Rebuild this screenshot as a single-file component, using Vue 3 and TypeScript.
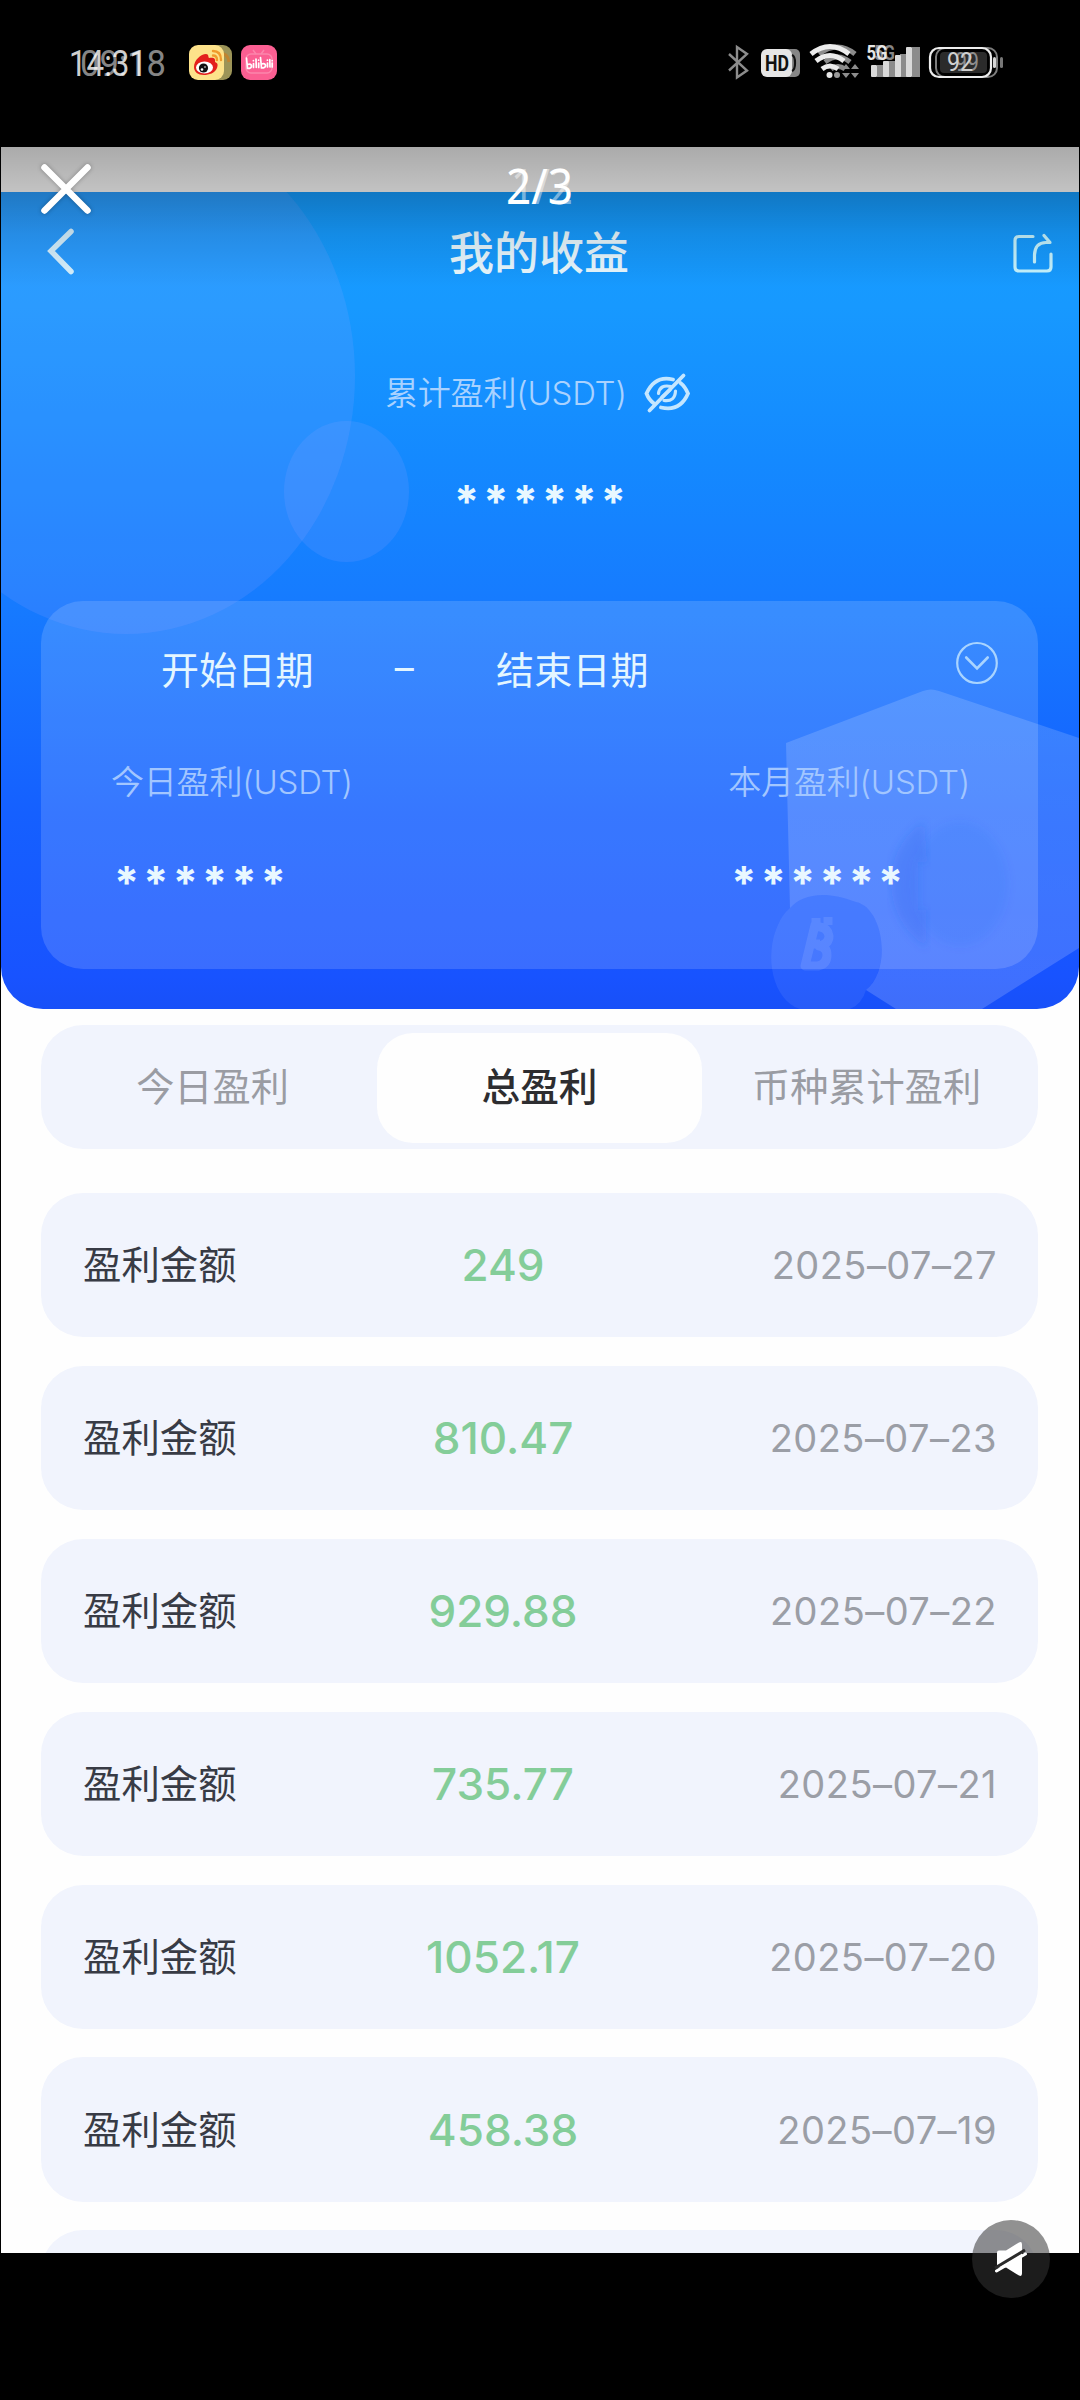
<script setup lang="ts">
interface ProfitRow {
  amount: string
  date: string
}

const rows: ProfitRow[] = [
  { amount: '249', date: '2025–07–27' },
  { amount: '810.47', date: '2025–07–23' },
  { amount: '929.88', date: '2025–07–22' },
  { amount: '735.77', date: '2025–07–21' },
  { amount: '1052.17', date: '2025–07–20' },
  { amount: '458.38', date: '2025–07–19' },
]

const tabs: string[] = ['今日盈利', '总盈利', '币种累计盈利']
const activeTab = 1
</script>

<template>
  <div class="screen">
    <header class="status">
      <svg class="status-left" width="300" height="60" viewBox="0 30 300 60">
        <text x="80" y="76" class="clock ghost" textLength="86" lengthAdjust="spacingAndGlyphs">09:18</text>
        <text x="69" y="76" class="clock" textLength="78" lengthAdjust="spacingAndGlyphs">14:31</text>
        <rect x="197" y="45" width="35" height="35" rx="9" fill="#9c9458" />
        <path d="M219 53 q9 0 10 9" fill="none" stroke="#c08430" stroke-width="3" />
        <rect x="189" y="45" width="35" height="35" rx="9" fill="#fde28a" />
        <path d="M194 67 c0-7 7-13 12-13 3 0 2 3 3 4 4-1 7 0 6 4 3 1 3 3 2 6 -2 5-8 7-13 7 -6 0-10-3-10-8z" fill="#e31f1c" />
        <ellipse cx="204.500" cy="67.500" rx="8.500" ry="6" fill="#fff" />
        <circle cx="203.500" cy="68" r="4.600" fill="#111" />
        <circle cx="202" cy="69.500" r="1.300" fill="#fff" />
        <circle cx="205" cy="67" r=".8" fill="#fff" />
        <path d="M213 51 q8 0 8 9 M213 55.500 q4 0 4 4.500" fill="none" stroke="#f19a2c" stroke-width="2.400" stroke-linecap="round" />
        <rect x="241" y="45" width="36" height="35" rx="9" fill="#fb5f92" />
        <rect x="246" y="54" width="26" height="19" rx="5" fill="none" stroke="#fc86ac" stroke-width="1.500" />
        <path d="M253 50 l3 4 M264 50 l-3 4" stroke="#fc86ac" stroke-width="1.500" />
        <g fill="none" stroke="#fff" stroke-width="1.700" stroke-linecap="round">
          <path d="M246.500 58 l1 10.500 q4 0 4-2.500 q0-2.500-4-1.500 M253.500 63.500 v4 M256 59 l.3 8.500 M258.700 63 v4.500 M253.400 60.500 v.2 M258.600 60 v.2" />
          <path d="M260.500 57.500 l1 10.500 q4 0 4-2.500 q0-2.500-4-1.500 M267.500 63 v4 M269.800 59.500 l.2 7.500 M272.200 63 v4 M267.400 60 v.2 M272.200 60.500 v.2" />
        </g>
      </svg>
      <svg class="status-right" width="300" height="60" viewBox="710 30 300 60">
        <path d="M729 54 L747 70.500 L737 77.500 V47 L747 54 L729 70.500" fill="none" stroke="#8c8c8c" stroke-width="2.400" />
        <rect x="769" y="49" width="31" height="28" rx="5" fill="#868686" />
        <rect x="761" y="49" width="31" height="28" rx="6" fill="#e6e6e6" />
        <text x="765" y="71" class="hd" textLength="24" lengthAdjust="spacingAndGlyphs">HD</text>
        <path d="M792 55 q3 1 3 8 t-3 8" fill="none" stroke="#111" stroke-width="2.200" />
        <g fill="none" stroke="#8b8b8b" stroke-width="5">
          <path d="M819 54 Q838 40 855 54 M825 62 Q838 52 850 62 M831 69 Q838 64 845 69" />
        </g>
        <g fill="none" stroke="#ececec" stroke-width="5">
          <path d="M811 54 Q830 39 849 54 M816 61 Q830 50 844 61 M822 69 Q830 63 838 69" />
        </g>
        <circle cx="829.500" cy="75" r="3" fill="#e6e6e6" />
        <circle cx="837" cy="75" r="3" fill="#999" />
        <path d="M842 69 l4-5 4 5z M851 69 l4-5 4 5z M842 73 l4 5 4-5z M851 73 l4 5 4-5z" fill="#8d8d8d" />
        <g fill="#8c8c8c">
          <rect x="877" y="65" width="9" height="12" /><rect x="888" y="61" width="10" height="16" />
          <rect x="900" y="54" width="9" height="23" /><rect x="912" y="47" width="8" height="30" />
        </g>
        <g fill="#dadada">
          <rect x="871" y="65" width="6" height="12" rx="1" /><rect x="883" y="61" width="6" height="16" rx="1" />
          <rect x="895" y="55" width="6" height="22" rx="1" /><rect x="906" y="47" width="6" height="30" rx="1" />
        </g>
        <text x="874" y="60" class="net ghost" textLength="21" lengthAdjust="spacingAndGlyphs">5G</text>
        <text x="866.500" y="60" class="net" textLength="21" lengthAdjust="spacingAndGlyphs">5G</text>
        <rect x="936" y="48" width="61" height="29" rx="9" fill="none" stroke="#7d7d7d" stroke-width="2" />
        <rect x="930" y="48" width="61" height="29" rx="9" fill="none" stroke="#ededed" stroke-width="2.200" />
        <rect x="940" y="52" width="47" height="21" rx="4" fill="#2b2b2b" />
        <rect x="993" y="57" width="3" height="11" rx="1.500" fill="#d5d5d5" />
        <rect x="1000" y="57" width="3" height="11" rx="1.500" fill="#777" />
        <text x="955" y="71" class="batt ghost" textLength="24" lengthAdjust="spacingAndGlyphs">99</text>
        <text x="947" y="71" class="batt" textLength="26" lengthAdjust="spacingAndGlyphs">92</text>
      </svg>
    </header>

    <main class="viewer">
      <div class="strip"></div>
      <section class="hero">
        <svg class="deco" width="1078" height="816" viewBox="1 192 1078 816">
          <ellipse cx="126" cy="376" rx="229" ry="258" fill="#a0a8ff" fill-opacity=".15" />
          <ellipse cx="346.500" cy="491.500" rx="62.500" ry="70.500" fill="#a0a8ff" fill-opacity=".15" />
        </svg>

        <div class="navbar">
          <svg class="back" width="30" height="52" viewBox="46 226 30 52">
            <path d="M71 231.500 L51 251 L71 271.500" fill="none" stroke="#d6f1ff" stroke-width="5.500" stroke-linecap="round" />
          </svg>
          <h1>我的收益</h1>
          <svg class="share" width="46" height="46" viewBox="1010 230 46 46">
            <g fill="none" stroke="#c5f3ff" stroke-width="3.200" stroke-linecap="round" stroke-linejoin="round">
              <path d="M1033 235.500 H1019 q-4 0-4 4 V266 q0 4 4 4 H1047 q4 0 4-4 V253" />
              <path d="M1034.500 261 V254 Q1035 241.500 1046 241.500 H1050 L1044 234.500" />
            </g>
          </svg>
        </div>

        <div class="total-label">
          <span class="caption">累计盈利<i>(USDT)</i></span>
          <svg width="46" height="42" viewBox="644 372 46 42">
            <g fill="none" stroke="#c4e6ff" stroke-width="3.800" stroke-linecap="round">
              <path d="M673 379.500 Q655 375 646.500 393.500 Q649 400 654 403.500 M661 407.500 Q680 412 688 393.500 Q685 386.500 680.500 383" />
              <path d="M671 386.500 Q660 384 658.500 393.500 M664 400.500 Q675 402 675.500 391 M662 397 l8-7" stroke-width="3.200" />
              <path d="M649.500 410.500 L683.500 375.500" />
            </g>
          </svg>
        </div>
        <div class="stars total-stars">******</div>

        <div class="card">
          <svg class="crypto" width="1078" height="408" viewBox="1 601 1078 408">
            <defs>
              <linearGradient id="hex" x1="0" y1="0" x2="0" y2="1">
                <stop offset="0" stop-color="#fff" stop-opacity=".15" />
                <stop offset="1" stop-color="#fff" stop-opacity=".17" />
              </linearGradient>
              <filter id="soft"><feGaussianBlur stdDeviation="4" /></filter>
            </defs>
            <path d="M786 743 L923 691 Q931 688 939 691 L1079 738 V948 L982 1009 H896 L866 990 C892 970 884 908 856 902 C826 890 802 894 790 908 Z" fill="url(#hex)" />
            <path d="M790 908 C802 894 826 890 856 902 C884 908 892 970 866 990 Q862 1004 850 1009 H800 C772 1000 764 955 778 925 Q782 915 790 908z" fill="#fff" fill-opacity=".07" />
            <ellipse cx="960" cy="884" rx="48" ry="62" fill="#2b5ce8" fill-opacity=".08" filter="url(#soft)" />
            <path d="M924 822 C880 850 880 915 926 947 V910 H918 V862 H927z" fill="#2b5ce8" fill-opacity=".2" filter="url(#soft)" />
            <g fill="none" stroke="#fff" stroke-opacity=".1" stroke-width="9" stroke-linejoin="round">
              <path d="M815 925 l-10 41 h13 q9-2 9-11 q0-8-8-9 q10-2 10-10 q-1-8-9-9 z M812 944 h8 M816 918 v8 M828 917 v8" />
            </g>
          </svg>
          <div class="range">
            <span class="start">开始日期</span>
            <span class="dash">–</span>
            <span class="end">结束日期</span>
            <svg class="more" width="44" height="46" viewBox="954.300 640 44 46">
              <ellipse cx="976.300" cy="663" rx="19.800" ry="20" fill="none" stroke="#a9d4ff" stroke-width="2.200" />
              <path d="M965.500 657.500 L976.300 668.500 L987 657.500" fill="none" stroke="#a9d4ff" stroke-width="2.600" stroke-linecap="round" />
            </svg>
          </div>
          <div class="stats">
            <div class="stat">
              <span class="caption">今日盈利<i>(USDT)</i></span>
              <div class="stars">******</div>
            </div>
            <div class="stat">
              <span class="caption">本月盈利<i>(USDT)</i></span>
              <div class="stars">******</div>
            </div>
          </div>
        </div>
      </section>

      <nav class="tabs">
        <span v-for="(tab, i) in tabs" :key="tab" class="tab" :class="{ active: i === activeTab }">{{ tab }}</span>
      </nav>

      <section class="list">
        <div v-for="row in rows" :key="row.date" class="row">
          <span class="name">盈利金额</span>
          <span class="amount">{{ row.amount }}</span>
          <span class="date">{{ row.date }}</span>
        </div>
        <div class="row"></div>
      </section>

      <div class="shade"></div>
      <svg class="close" width="64" height="64" viewBox="34 157 64 64">
        <path d="M44.500 167.500 L87.500 210.500 M87.500 167.500 L44.500 210.500" stroke="#fff" stroke-width="6.500" stroke-linecap="round" />
      </svg>
      <svg class="pager" width="100" height="72" viewBox="490 149 100 72">
        <text x="511" y="204" class="page-no faded" textLength="62" lengthAdjust="spacingAndGlyphs">1/2</text>
        <text x="506" y="204" class="page-no" textLength="67" lengthAdjust="spacingAndGlyphs">2/3</text>
      </svg>
    </main>

    <button class="mute" aria-label="mute">
      <svg width="78" height="78" viewBox="972 2220 78 78">
        <path d="M999 2250.500 h7 l13-8 q3-1.500 3 2 v29 q0 3.500 -3 2 l-13-8 h-7 q-2 0-2-2 v-13 q0-2 2-2z" fill="#fff" />
        <path d="M995 2268 L1025 2250" stroke="#2b2b2b" stroke-width="3" />
        <path d="M996.500 2271 L1025.500 2254" stroke="#fff" stroke-width="3" stroke-linecap="round" />
      </svg>
    </button>
  </div>
</template>

<style>
body {
  background: #000;
}
</style>

<style scoped>
.screen {
  position: relative;
  width: 1080px;
  height: 2400px;
  background: #000;
  overflow: hidden;
  font-family: Inter, "Noto Sans CJK SC", sans-serif;
}
.status {
  height: 147px;
  box-sizing: border-box;
  padding-top: 30px;
  display: flex;
  justify-content: space-between;
}
.status-right {
  margin-right: 70px;
}
.clock {
  font: 400 37px Roboto, sans-serif;
  fill: rgba(255, 255, 255, 0.82);
}
.clock.ghost {
  fill: #858585;
}
.hd {
  font: 700 22px Roboto, sans-serif;
  fill: #111;
}
.net {
  font: 700 20px Roboto, sans-serif;
  fill: #e6e6e6;
}
.net.ghost {
  fill: #858585;
}
.batt {
  font: 400 25px Roboto, sans-serif;
  fill: #cfcfcf;
}
.batt.ghost {
  fill: #8d8d8d;
}
.viewer {
  position: relative;
  width: 1078px;
  height: 2106px;
  margin-left: 1px;
  background: #fefefe;
  overflow: hidden;
}
.strip {
  height: 45px;
  background: #fefefe;
}
.hero {
  position: relative;
  height: 816.5px;
  border-radius: 0 0 42px 42px;
  overflow: hidden;
  background: linear-gradient(180deg, #159cff 0%, #1799ff 14%, #1489ff 33%, #167cff 49%, #1560ff 76%, #1853ff 96%, #1850f8 100%);
}
.deco,
.crypto {
  position: absolute;
  left: 0;
  top: 0;
}
.navbar {
  position: relative;
  height: 120px;
  display: flex;
  align-items: center;
  justify-content: space-between;
  padding: 0 23px 0 45px;
}
.navbar h1 {
  margin: 4px 0 0 -8px;
  font-size: 45px;
  font-weight: 500;
  line-height: 60px;
  color: #e8f8ff;
}
.share {
  margin-top: 3px;
}
.total-label {
  position: relative;
  display: flex;
  align-items: center;
  height: 48px;
  margin: 57px 0 0 384px;
  gap: 17px;
}
.caption {
  display: block;
  font-size: 33px;
  line-height: 40px;
  font-weight: 350;
  letter-spacing: -0.2px;
  color: #a9d2ff;
  white-space: nowrap;
}
.caption i {
  font-style: normal;
  font-weight: 300;
}
.stars {
  font-family: Inter, sans-serif;
  font-size: 45px;
  font-weight: 700;
  line-height: 40px;
  letter-spacing: 4.2px;
  color: #e9f8ff;
  white-space: nowrap;
}
.total-stars {
  position: relative;
  margin: 65px 0 0 453px;
}
.card {
  margin: 79px 41px 0 40px;
  height: 368px;
  border-radius: 42px;
  background: rgba(255, 255, 255, 0.15);
}
.crypto {
  top: 409px;
}
.range {
  position: relative;
  display: flex;
  align-items: center;
  height: 60px;
  padding: 36px 0 0 120px;
  font-size: 38px;
  letter-spacing: 0.2px;
  color: #e4f6ff;
}
.dash {
  margin-left: 81px;
}
.end {
  margin-left: 82px;
}
.more {
  margin: -8px 39px 0 auto;
}
.stats {
  position: relative;
  display: flex;
  justify-content: space-between;
  padding: 65px 68px 0 70px;
}
.stat .caption {
  color: #a2c6ff;
}
.stat .stars {
  margin: 61px 0 0 3px;
}
.tabs {
  display: flex;
  box-sizing: border-box;
  height: 124.5px;
  margin: 16px 41px 0 40px;
  padding: 8.5px 8px 6px;
  border-radius: 42px;
  background: #f1f4fd;
}
.tab {
  flex: 1;
  display: flex;
  align-items: center;
  justify-content: center;
  box-sizing: border-box;
  padding-bottom: 2px;
  border-radius: 36px;
  margin: 0 1px;
  font-size: 38.2px;
  line-height: 50px;
  color: #9a9ca3;
}
.tab.active {
  background: #fefefe;
  font-weight: 500;
  font-size: 38.7px;
  color: #2d2d30;
}
.list {
  display: flex;
  flex-direction: column;
  gap: 28.5px;
  margin: 44px 41px 0 40px;
}
.row {
  position: relative;
  flex: none;
  display: grid;
  grid-template-columns: 260px 320px 1fr;
  align-items: center;
  box-sizing: border-box;
  height: 144.4px;
  padding: 0 41px 0 42px;
  border-radius: 42px;
  background: #f1f4fd;
}
.name {
  font-size: 38.4px;
  line-height: 50px;
  color: #383b45;
}
.amount {
  text-align: center;
  font-size: 44px;
  line-height: 50px;
  font-weight: 500;
  color: #84cd99;
}
.date {
  text-align: right;
  font-size: 38px;
  line-height: 50px;
  font-weight: 400;
  letter-spacing: 0.45px;
  color: #9b9ea6;
}
.shade {
  position: absolute;
  inset: 0 0 auto;
  height: 140px;
  background: linear-gradient(rgba(0, 0, 0, 0.33), rgba(0, 0, 0, 0.23) 33%, rgba(0, 0, 0, 0.1) 62%, rgba(0, 0, 0, 0));
}
.close {
  position: absolute;
  left: 33px;
  top: 10px;
  filter: drop-shadow(0 0 2px rgba(0, 0, 0, 0.3));
}
.pager {
  position: absolute;
  left: 489px;
  top: 2px;
}
.page-no {
  font: 400 49px "Noto Sans", sans-serif;
  fill: #fff;
}
.page-no.faded {
  fill: rgba(255, 255, 255, 0.45);
}
.mute {
  position: absolute;
  left: 972px;
  top: 2220px;
  width: 78px;
  height: 78px;
  padding: 0;
  border: 0;
  border-radius: 50%;
  background: rgba(52, 52, 52, 0.54);
}
.mute svg {
  display: block;
}
</style>
